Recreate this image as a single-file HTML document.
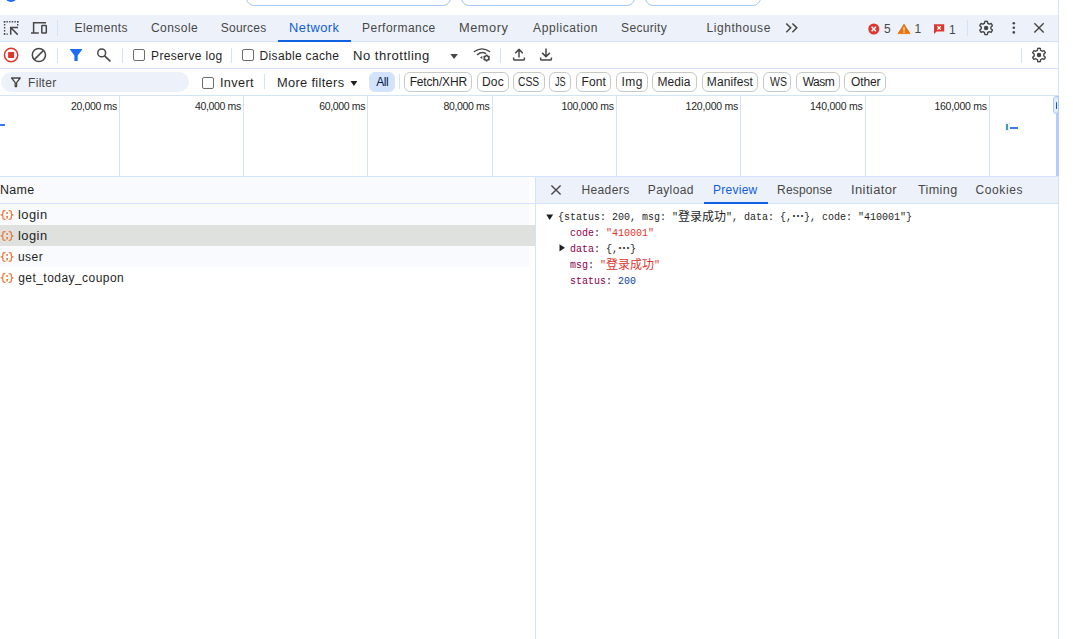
<!DOCTYPE html>
<html lang="en"><head><meta charset="utf-8"><title>DevTools - Network</title>
<style>
html,body{margin:0;padding:0;background:#fff;}
body{width:1073px;height:639px;position:relative;overflow:hidden;font-family:"Liberation Sans","Noto Sans CJK SC",sans-serif;font-size:12px;color:#1f1f1f;}
.a{position:absolute;}
.t{position:absolute;white-space:nowrap;line-height:14px;height:14px;}
.vs{position:absolute;width:1px;background:#d3e3fd;}
.hs{position:absolute;height:1px;background:#d3e3fd;}
.cb{position:absolute;width:10px;height:10px;border:1px solid #6b6e6c;border-radius:2px;background:#fff;}
.pill{position:absolute;top:72px;height:17.5px;border:1px solid #c7c9c7;border-radius:6px;box-sizing:content-box;text-align:center;line-height:18px;font-size:12px;color:#1f1f1f;white-space:nowrap;background:#fff;}
.pill.sel{background:#d3e3fd;border-color:#d3e3fd;color:#041e49;}
.mono{position:absolute;white-space:pre;font-family:"Liberation Mono","Noto Serif CJK SC",monospace;font-size:10px;line-height:16px;height:16px;color:#1f1f1f;}
.mono .cj{font-family:"Noto Sans CJK SC","Noto Serif CJK SC",sans-serif;font-size:12px;line-height:0;position:relative;top:1px;}
.k{color:#8e004b;}
.s{color:#dc362e;}
.n{color:#0842a0;}
svg{position:absolute;overflow:visible;}

</style></head><body>

<div class="a" style="left:5px;top:-10px;width:12px;height:12px;border-radius:50%;background:#1a6ce8;"></div>
<div class="a" style="left:245.5px;top:-20px;width:203.0px;height:24px;border:1px solid #a8c7fa;border-radius:8px;box-sizing:content-box;"></div>
<div class="a" style="left:460.5px;top:-20px;width:172.0px;height:24px;border:1px solid #a8c7fa;border-radius:8px;box-sizing:content-box;"></div>
<div class="a" style="left:644.5px;top:-20px;width:114.0px;height:24px;border:1px solid #a8c7fa;border-radius:8px;box-sizing:content-box;"></div>
<div class="a" style="left:0;top:15px;width:1058px;height:26px;background:#edf2fa;"></div>
<div class="hs" style="left:0;top:41px;width:1058px;"></div>
<div class="vs" style="left:1058px;top:0;height:639px;"></div>
<div class="vs" style="left:57px;top:20px;height:16px;"></div>
<div class="vs" style="left:967px;top:20px;height:16px;"></div>
<div class="a" style="left:278px;top:39.8px;width:73px;height:2.2px;background:#1060e4;"></div>
<div class="hs" style="left:0;top:68px;width:1058px;"></div>
<div class="vs" style="left:57px;top:48px;height:15px;"></div>
<div class="vs" style="left:122px;top:48px;height:15px;"></div>
<div class="vs" style="left:231px;top:48px;height:15px;"></div>
<div class="vs" style="left:500px;top:48px;height:15px;"></div>
<div class="vs" style="left:1021px;top:48px;height:15px;"></div>
<div class="cb" style="left:133px;top:49px;"></div>
<div class="cb" style="left:242px;top:49px;"></div>
<div class="a" style="left:0.5px;top:72px;width:188.5px;height:19.5px;border-radius:10px;background:#edf2fa;"></div>
<div class="cb" style="left:202px;top:76.5px;"></div>
<div class="vs" style="left:264px;top:74px;height:15px;"></div>
<div class="vs" style="left:399px;top:74px;height:15px;"></div>
<div class="hs" style="left:0;top:95px;width:1058px;"></div>
<div class="pill sel" style="left:369.4px;width:23.4px;"></div>
<div class="pill" style="left:404.3px;width:65.5px;"></div>
<div class="pill" style="left:476.5px;width:30.3px;"></div>
<div class="pill" style="left:513.0px;width:29.6px;"></div>
<div class="pill" style="left:549.4px;width:19.5px;"></div>
<div class="pill" style="left:576.2px;width:32.9px;"></div>
<div class="pill" style="left:615.5px;width:30.5px;"></div>
<div class="pill" style="left:652.4px;width:42.6px;"></div>
<div class="pill" style="left:701.7px;width:54.4px;"></div>
<div class="pill" style="left:763.2px;width:25.8px;"></div>
<div class="pill" style="left:796.0px;width:41.7px;"></div>
<div class="pill" style="left:844.4px;width:39.9px;"></div>
<div class="vs" style="left:119px;top:96px;height:80px;"></div>
<div class="vs" style="left:243px;top:96px;height:80px;"></div>
<div class="vs" style="left:367px;top:96px;height:80px;"></div>
<div class="vs" style="left:492px;top:96px;height:80px;"></div>
<div class="vs" style="left:616px;top:96px;height:80px;"></div>
<div class="vs" style="left:740px;top:96px;height:80px;"></div>
<div class="vs" style="left:865px;top:96px;height:80px;"></div>
<div class="vs" style="left:989px;top:96px;height:80px;"></div>
<div class="hs" style="left:0;top:176px;width:1058px;"></div>
<div class="a" style="left:0;top:124.4px;width:5px;height:2px;background:#3b78f2;"></div>
<div class="a" style="left:1004.5px;top:122px;width:5px;height:9px;background:#eef4fe;"></div>
<div class="a" style="left:1006px;top:123.6px;width:2px;height:6px;background:#4a97bb;"></div>
<div class="a" style="left:1010.2px;top:127.4px;width:7.6px;height:1.9px;background:#3b78f2;"></div>
<div class="a" style="left:1056px;top:96px;width:2.6px;height:80px;background:#b4cefb;"></div>
<div class="a" style="left:1053px;top:96px;width:5px;height:17px;background:#e4ecfb;border:1px solid #a8c7fa;border-radius:3px;box-sizing:border-box;width:6px;height:18px;"></div>
<div class="a" style="left:1055.6px;top:101.5px;width:1.5px;height:7.5px;background:#0b57d0;border-radius:1px;"></div>
<div class="a" style="left:0;top:177px;width:529px;height:26px;background:#f8fafd;"></div>
<div class="hs" style="left:0;top:203px;width:1058px;"></div>
<div class="a" style="left:0;top:204px;width:529px;height:21px;background:#f8fafd;"></div>
<div class="a" style="left:0;top:225px;width:535px;height:21px;background:#dfe1de;"></div>
<div class="a" style="left:0;top:246px;width:529px;height:21px;background:#f8fafd;"></div>
<div class="vs" style="left:535px;top:177px;height:462px;"></div>
<div class="a" style="left:536px;top:177px;width:522px;height:26px;background:#edf2fa;"></div>
<div class="a" style="left:704px;top:201.8px;width:64px;height:2.2px;background:#1060e4;"></div>
<div class="t" id="t_el" style="left:74.60px;top:20.50px;color:#474747;letter-spacing:0.429px;">Elements</div>
<div class="t" id="t_co" style="left:150.90px;top:20.50px;color:#474747;letter-spacing:0.467px;">Console</div>
<div class="t" id="t_so" style="left:220.80px;top:20.50px;color:#474747;letter-spacing:0.233px;">Sources</div>
<div class="t" id="t_ne" style="left:288.93px;top:20.50px;color:#0f5ddc;letter-spacing:0.460px;transform:scaleX(1.069);transform-origin:0 0;">Network</div>
<div class="t" id="t_pe" style="left:362.10px;top:20.50px;color:#474747;letter-spacing:0.450px;">Performance</div>
<div class="t" id="t_me" style="left:459.33px;top:20.50px;color:#474747;letter-spacing:0.516px;transform:scaleX(1.065);transform-origin:0 0;">Memory</div>
<div class="t" id="t_ap" style="left:533.10px;top:20.50px;color:#474747;letter-spacing:0.570px;">Application</div>
<div class="t" id="t_se" style="left:621.10px;top:20.50px;color:#474747;letter-spacing:0.329px;">Security</div>
<div class="t" id="t_li" style="left:706.40px;top:20.50px;color:#474747;letter-spacing:0.578px;">Lighthouse</div>
<div class="t" id="c_5" style="left:884.00px;top:21.60px;color:#474747;">5</div>
<div class="t" id="c_1a" style="left:914.60px;top:21.60px;color:#474747;">1</div>
<div class="t" id="c_1b" style="left:949.00px;top:22.60px;color:#474747;">1</div>
<div class="t" id="p_log" style="left:151.10px;top:48.70px;color:#1f1f1f;letter-spacing:0.336px;">Preserve log</div>
<div class="t" id="d_cache" style="left:259.60px;top:48.70px;color:#1f1f1f;letter-spacing:0.333px;">Disable cache</div>
<div class="t" id="n_thr" style="left:353.31px;top:48.70px;color:#1f1f1f;letter-spacing:0.439px;transform:scaleX(1.091);transform-origin:0 0;">No throttling</div>
<div class="t" id="f_filter" style="left:28.10px;top:75.90px;color:#474747;letter-spacing:0.280px;">Filter</div>
<div class="t" id="f_inv" style="left:219.84px;top:75.90px;color:#1f1f1f;letter-spacing:0.321px;transform:scaleX(1.059);transform-origin:0 0;">Invert</div>
<div class="t" id="f_more" style="left:276.63px;top:75.90px;color:#1f1f1f;letter-spacing:0.324px;transform:scaleX(1.066);transform-origin:0 0;">More filters</div>
<div class="t" id="tl0" style="left:71.00px;top:99.30px;color:#1f1f1f;font-size:10.5px;letter-spacing:-0.350px;">20,000 ms</div>
<div class="t" id="tl1" style="left:195.00px;top:99.30px;color:#1f1f1f;font-size:10.5px;letter-spacing:-0.350px;">40,000 ms</div>
<div class="t" id="tl2" style="left:319.20px;top:99.30px;color:#1f1f1f;font-size:10.5px;letter-spacing:-0.350px;">60,000 ms</div>
<div class="t" id="tl3" style="left:443.50px;top:99.30px;color:#1f1f1f;font-size:10.5px;letter-spacing:-0.350px;">80,000 ms</div>
<div class="t" id="tl4" style="left:561.40px;top:99.30px;color:#1f1f1f;font-size:10.5px;letter-spacing:-0.244px;">100,000 ms</div>
<div class="t" id="tl5" style="left:685.60px;top:99.30px;color:#1f1f1f;font-size:10.5px;letter-spacing:-0.244px;">120,000 ms</div>
<div class="t" id="tl6" style="left:810.00px;top:99.30px;color:#1f1f1f;font-size:10.5px;letter-spacing:-0.244px;">140,000 ms</div>
<div class="t" id="tl7" style="left:934.40px;top:99.30px;color:#1f1f1f;font-size:10.5px;letter-spacing:-0.244px;">160,000 ms</div>
<div class="t" id="h_name" style="left:0.06px;top:182.70px;color:#1f1f1f;letter-spacing:0.354px;transform:scaleX(1.035);transform-origin:0 0;">Name</div>
<div class="t" id="r1" style="left:17.82px;top:207.50px;color:#1f1f1f;letter-spacing:0.419px;transform:scaleX(1.075);transform-origin:0 0;">login</div>
<div class="t" id="r2" style="left:17.82px;top:228.50px;color:#1f1f1f;letter-spacing:0.419px;transform:scaleX(1.075);transform-origin:0 0;">login</div>
<div class="t" id="r3" style="left:17.90px;top:249.50px;color:#1f1f1f;letter-spacing:0.467px;">user</div>
<div class="t" id="r4" style="left:18.20px;top:270.70px;color:#1f1f1f;letter-spacing:0.453px;">get_today_coupon</div>
<div class="t" id="d_he" style="left:581.40px;top:183.10px;color:#474747;letter-spacing:0.400px;">Headers</div>
<div class="t" id="d_pa" style="left:647.80px;top:183.10px;color:#474747;letter-spacing:0.383px;">Payload</div>
<div class="t" id="d_pr" style="left:713.00px;top:183.10px;color:#0f5ddc;letter-spacing:0.267px;">Preview</div>
<div class="t" id="d_re" style="left:777.10px;top:183.10px;color:#474747;letter-spacing:0.157px;">Response</div>
<div class="t" id="d_in" style="left:851.32px;top:183.10px;color:#474747;letter-spacing:0.358px;transform:scaleX(1.082);transform-origin:0 0;">Initiator</div>
<div class="t" id="d_ti" style="left:918.20px;top:183.10px;color:#474747;letter-spacing:0.342px;transform:scaleX(1.051);transform-origin:0 0;">Timing</div>
<div class="t" id="d_ck" style="left:975.60px;top:183.10px;color:#474747;letter-spacing:0.583px;">Cookies</div>
<div class="t" id="pl_All" style="left:376.30px;top:75.00px;color:#041e49;letter-spacing:-0.500px;">All</div>
<div class="t" id="pl_Fetch_XHR" style="left:409.70px;top:75.00px;color:#1f1f1f;letter-spacing:-0.163px;">Fetch/XHR</div>
<div class="t" id="pl_Doc" style="left:481.90px;top:75.00px;color:#1f1f1f;letter-spacing:0.250px;">Doc</div>
<div class="t" id="pl_CSS" style="left:518.44px;top:75.00px;color:#1f1f1f;transform:scaleX(0.857);transform-origin:0 0;">CSS</div>
<div class="t" id="pl_JS" style="left:555.10px;top:75.00px;color:#1f1f1f;transform:scaleX(0.764);transform-origin:0 0;">JS</div>
<div class="t" id="pl_Font" style="left:581.50px;top:75.00px;color:#1f1f1f;letter-spacing:0.067px;">Font</div>
<div class="t" id="pl_Img" style="left:621.40px;top:75.00px;color:#1f1f1f;letter-spacing:0.550px;">Img</div>
<div class="t" id="pl_Media" style="left:657.50px;top:75.00px;color:#1f1f1f;letter-spacing:0.050px;">Media</div>
<div class="t" id="pl_Manifest" style="left:706.80px;top:75.00px;color:#1f1f1f;letter-spacing:0.114px;">Manifest</div>
<div class="t" id="pl_WS" style="left:769.60px;top:75.00px;color:#1f1f1f;transform:scaleX(0.874);transform-origin:0 0;">WS</div>
<div class="t" id="pl_Wasm" style="left:802.70px;top:75.00px;color:#1f1f1f;letter-spacing:-0.467px;">Wasm</div>
<div class="t" id="pl_Other" style="left:851.00px;top:75.00px;color:#1f1f1f;letter-spacing:-0.125px;">Other</div>
<div class="mono" style="left:558.0px;top:210.4px;">{status: 200, msg: "<span class="cj" lang="zh-CN">登录成功</span>", data: {,<span class="cj" lang="zh-CN" style="font-weight:bold">…</span>}, code: "410001"}</div>
<div class="mono" style="left:570.0px;top:226.0px;"><span class="k">code</span>: <span class="s">"410001"</span></div>
<div class="mono" style="left:570.0px;top:242.0px;"><span class="k">data</span>: {,<span class="cj" lang="zh-CN" style="font-weight:bold">…</span>}</div>
<div class="mono" style="left:570.0px;top:258.0px;"><span class="k">msg</span>: <span class="s">"<span class="cj" lang="zh-CN">登录成功</span>"</span></div>
<div class="mono" style="left:570.0px;top:274.0px;"><span class="k">status</span>: <span class="n">200</span></div>
<svg style="left:546px;top:214px" width="8" height="7" viewBox="0 0 8 7"><path d="M0.3 0.6 H7.1 L3.7 5.9 Z" fill="#1f1f1f"/></svg>
<svg style="left:559px;top:244px" width="7" height="8" viewBox="0 0 7 8"><path d="M0.5 0.2 V7.4 L5.9 3.8 Z" fill="#1f1f1f"/></svg>
<svg style="left:0;top:0" width="1073" height="639" viewBox="0 0 1073 639" fill="none" stroke-linecap="butt">
<g stroke="#474747" stroke-width="1.4">
<path d="M3.8 21.8H18.5" stroke-dasharray="1.4 1.25"/>
<path d="M4.6 21.1V35" stroke-dasharray="1.4 1.6"/>
<path d="M17.7 21.1V26" stroke-dasharray="1.4 1.6"/>
<path d="M3.8 34.1H9" stroke-dasharray="1.4 1.25"/>
<path d="M18 27.6H10.7V34.8M10.9 27.8L17.7 34.6" stroke-width="1.5"/>
</g>
<g stroke="#474747" stroke-width="1.5">
<path d="M46 22.8H33.6V32.3M31 33.1H38.8" />
<rect x="41.8" y="25.6" width="4.5" height="7.4" rx="0.6"/>
</g>
<circle cx="11.1" cy="55" r="6.65" stroke="#dc362e" stroke-width="1.5"/>
<rect x="8.1" y="52" width="6" height="6" rx="0.6" fill="#dc362e"/>
<g stroke="#474747" stroke-width="1.5"><circle cx="38.9" cy="55" r="6.6"/><path d="M34.3 59.6L43.5 50.4"/></g>
<path d="M70.4 49H81.8Q82.6 49 82 49.8L77.7 55.4V60.4Q77.7 61 77.1 61H75Q74.4 61 74.4 60.4V55.4L70.1 49.8Q69.6 49 70.4 49Z" fill="#1b6ef3"/>
<g stroke="#474747" stroke-width="1.5"><circle cx="101.7" cy="52.9" r="3.9"/><path d="M104.6 55.9L110.4 61.4" stroke-width="1.7"/></g>
<path d="M450.3 53.9H457.9L454.1 58.9Z" fill="#474747"/>
<path d="M350.5 81H357.4L353.95 85.9Z" fill="#1f1f1f"/>
<g stroke="#474747" stroke-width="1.4" stroke-linecap="round">
<path d="M474.4 51.5Q482 46.2 489.6 51.5"/>
<path d="M477.4 54.6Q481.5 51.2 485.6 53.4"/>
</g>
<path d="M479.9 57.4L482.3 56V58.9Z" fill="#474747"/>
<path d="M485.92 56.22L486.10 55.24A2.90 2.90 0 0 1 487.10 55.24L487.28 56.22A2.00 2.00 0 0 1 487.89 56.57L488.82 56.24A2.90 2.90 0 0 1 489.33 57.11L488.57 57.75A2.00 2.00 0 0 1 488.57 58.45L489.33 59.09A2.90 2.90 0 0 1 488.82 59.96L487.89 59.63A2.00 2.00 0 0 1 487.28 59.98L487.10 60.96A2.90 2.90 0 0 1 486.10 60.96L485.92 59.98A2.00 2.00 0 0 1 485.31 59.63L484.38 59.96A2.90 2.90 0 0 1 483.87 59.09L484.63 58.45A2.00 2.00 0 0 1 484.63 57.75L483.87 57.11A2.90 2.90 0 0 1 484.38 56.24L485.31 56.57A2.00 2.00 0 0 1 485.92 56.22 Z" stroke="#474747" stroke-width="1.3" stroke-linejoin="round"/>
<g stroke="#474747" stroke-width="1.5" stroke-linejoin="round">
<path d="M519 57.5V49.6M515.2 53.2L519 49.4L522.8 53.2"/>
<path d="M513.6 57.6V59Q513.6 60.1 514.7 60.1H523.3Q524.4 60.1 524.4 59V57.6"/>
<path d="M546 48.6V56.5M542.2 52.9L546 56.7L549.8 52.9"/>
<path d="M540.6 57.6V59Q540.6 60.1 541.7 60.1H550.3Q551.4 60.1 551.4 59V57.6"/>
</g>
<circle cx="873.8" cy="29" r="5.5" fill="#dc362e"/>
<path d="M871.6 26.8L876 31.2M876 26.8L871.6 31.2" stroke="#fff" stroke-width="1.5"/>
<path d="M904 24.2L910 33.6H898Z" fill="#e8710a" stroke="#e8710a" stroke-width="0.8" stroke-linejoin="round"/>
<path d="M904 27.2V30.6M904 31.4V32.6" stroke="#fff" stroke-width="1.3"/>
<path d="M934.3 24.2H943.7Q944.2 24.2 944.2 24.7V31Q944.2 31.5 943.7 31.5H936.6L934 34V24.6Q934 24.2 934.3 24.2Z" fill="#dc362e"/>
<path d="M937.4 26.2L940.8 29.6M940.8 26.2L937.4 29.6" stroke="#fff" stroke-width="1.3"/>
<path d="M984.50 23.27L984.82 21.32A6.70 6.70 0 0 1 987.38 21.32L987.70 23.27A4.90 4.90 0 0 1 989.31 24.20L991.16 23.50A6.70 6.70 0 0 1 992.43 25.72L990.91 26.97A4.90 4.90 0 0 1 990.91 28.83L992.43 30.08A6.70 6.70 0 0 1 991.16 32.30L989.31 31.60A4.90 4.90 0 0 1 987.70 32.53L987.38 34.48A6.70 6.70 0 0 1 984.82 34.48L984.50 32.53A4.90 4.90 0 0 1 982.89 31.60L981.04 32.30A6.70 6.70 0 0 1 979.77 30.08L981.29 28.83A4.90 4.90 0 0 1 981.29 26.97L979.77 25.72A6.70 6.70 0 0 1 981.04 23.50L982.89 24.20A4.90 4.90 0 0 1 984.50 23.27 Z" stroke="#474747" stroke-width="1.4" stroke-linejoin="round"/>
<circle cx="986.1" cy="27.9" r="2.25" fill="#474747"/>
<path d="M1037.40 50.37L1037.72 48.42A6.70 6.70 0 0 1 1040.28 48.42L1040.60 50.37A4.90 4.90 0 0 1 1042.21 51.30L1044.06 50.60A6.70 6.70 0 0 1 1045.33 52.82L1043.81 54.07A4.90 4.90 0 0 1 1043.81 55.93L1045.33 57.18A6.70 6.70 0 0 1 1044.06 59.40L1042.21 58.70A4.90 4.90 0 0 1 1040.60 59.63L1040.28 61.58A6.70 6.70 0 0 1 1037.72 61.58L1037.40 59.63A4.90 4.90 0 0 1 1035.79 58.70L1033.94 59.40A6.70 6.70 0 0 1 1032.67 57.18L1034.19 55.93A4.90 4.90 0 0 1 1034.19 54.07L1032.67 52.82A6.70 6.70 0 0 1 1033.94 50.60L1035.79 51.30A4.90 4.90 0 0 1 1037.40 50.37 Z" stroke="#474747" stroke-width="1.4" stroke-linejoin="round"/>
<circle cx="1039.0" cy="55.0" r="2.25" fill="#474747"/>
<circle cx="1013.8" cy="23.2" r="1.3" fill="#474747"/>
<circle cx="1013.8" cy="27.8" r="1.3" fill="#474747"/>
<circle cx="1013.8" cy="32.4" r="1.3" fill="#474747"/>
<path d="M786.3 23.5L790.7 27.85L786.3 32.2M792.4 23.5L796.8 27.85L792.4 32.2" stroke="#474747" stroke-width="1.5"/>
<path d="M1034.4 23.3L1043.7 32.6M1043.7 23.3L1034.4 32.6" stroke="#474747" stroke-width="1.4"/>
<path d="M551.4 185.4L560.6 194.6M560.6 185.4L551.4 194.6" stroke="#474747" stroke-width="1.4"/>
<path d="M11.6 78H20.2L16.6 82.6V86.6H15.2V82.6Z" stroke="#474747" stroke-width="1.3" stroke-linejoin="round"/>
<g stroke="#ea7a3a" stroke-width="1.25" stroke-linecap="round" stroke-linejoin="round">
<path d="M5.0 210.5Q2.9 210.5 2.9 212.0V213.6Q2.9 214.9 1.2 214.9Q2.9 214.9 2.9 216.2V217.8Q2.9 219.3 5.0 219.3"/>
<path d="M9.2 210.5Q11.3 210.5 11.3 212.0V213.6Q11.3 214.9 13.0 214.9Q11.3 214.9 11.3 216.2V217.8Q11.3 219.3 9.2 219.3"/>
</g>
<circle cx="7.1" cy="213.0" r="0.95" fill="#ea7a3a"/>
<path d="M6.2 215.9H8V217.4L6.9 219.0H6.3L6.9 217.6H6.2Z" fill="#ea7a3a"/>
<g stroke="#ea7a3a" stroke-width="1.25" stroke-linecap="round" stroke-linejoin="round">
<path d="M5.0 231.5Q2.9 231.5 2.9 233.0V234.6Q2.9 235.9 1.2 235.9Q2.9 235.9 2.9 237.2V238.8Q2.9 240.3 5.0 240.3"/>
<path d="M9.2 231.5Q11.3 231.5 11.3 233.0V234.6Q11.3 235.9 13.0 235.9Q11.3 235.9 11.3 237.2V238.8Q11.3 240.3 9.2 240.3"/>
</g>
<circle cx="7.1" cy="234.0" r="0.95" fill="#ea7a3a"/>
<path d="M6.2 236.9H8V238.4L6.9 240.0H6.3L6.9 238.6H6.2Z" fill="#ea7a3a"/>
<g stroke="#ea7a3a" stroke-width="1.25" stroke-linecap="round" stroke-linejoin="round">
<path d="M5.0 252.5Q2.9 252.5 2.9 254.0V255.6Q2.9 256.9 1.2 256.9Q2.9 256.9 2.9 258.2V259.8Q2.9 261.3 5.0 261.3"/>
<path d="M9.2 252.5Q11.3 252.5 11.3 254.0V255.6Q11.3 256.9 13.0 256.9Q11.3 256.9 11.3 258.2V259.8Q11.3 261.3 9.2 261.3"/>
</g>
<circle cx="7.1" cy="255.0" r="0.95" fill="#ea7a3a"/>
<path d="M6.2 257.9H8V259.4L6.9 261.0H6.3L6.9 259.6H6.2Z" fill="#ea7a3a"/>
<g stroke="#ea7a3a" stroke-width="1.25" stroke-linecap="round" stroke-linejoin="round">
<path d="M5.0 273.5Q2.9 273.5 2.9 275.0V276.6Q2.9 277.9 1.2 277.9Q2.9 277.9 2.9 279.2V280.8Q2.9 282.3 5.0 282.3"/>
<path d="M9.2 273.5Q11.3 273.5 11.3 275.0V276.6Q11.3 277.9 13.0 277.9Q11.3 277.9 11.3 279.2V280.8Q11.3 282.3 9.2 282.3"/>
</g>
<circle cx="7.1" cy="276.0" r="0.95" fill="#ea7a3a"/>
<path d="M6.2 278.9H8V280.4L6.9 282.0H6.3L6.9 280.6H6.2Z" fill="#ea7a3a"/>
</svg>

</body></html>
